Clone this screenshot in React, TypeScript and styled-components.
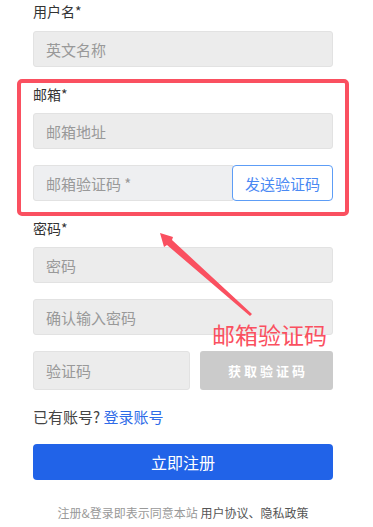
import React from "react";
import styled, { createGlobalStyle } from "styled-components";

const GlobalStyle = createGlobalStyle`
  html, body { margin: 0; padding: 0; background: #fff; }
  body { font-family: "Noto Sans CJK SC", "Noto Sans", sans-serif; }
  * { box-sizing: border-box; }
`;

const Page = styled.div`
  position: relative;
  width: 373px;
  height: 527px;
  overflow: hidden;
  padding: 1px 40px 0 33px;
`;

const Label = styled.div<{ $mt?: number }>`
  margin-top: ${(p) => p.$mt ?? 0}px;
  font-size: 14px;
  line-height: 20px;
  color: #333;
`;

const Input = styled.input<{ $mt?: number; $bg?: string; $radius?: string }>`
  display: block;
  width: 100%;
  min-width: 0;
  height: 36px;
  margin-top: ${(p) => p.$mt ?? 0}px;
  padding: 0 12px;
  border: 1px solid #e2e2e2;
  border-radius: ${(p) => p.$radius ?? "3px"};
  background: ${(p) => p.$bg ?? "#ececec"};
  font-family: inherit;
  font-size: 15px;
  color: #333;
  outline: none;
  &::placeholder { color: #999; }
`;

const Highlight = styled.div`
  margin: 12px -16px 0;
  padding: 1px 12px 11px;
  border: 4px solid #fa5060;
  border-radius: 5px;
`;

const Row = styled.div<{ $mt: number; $h: number; $gap: number }>`
  display: flex;
  gap: ${(p) => p.$gap}px;
  height: ${(p) => p.$h}px;
  margin-top: ${(p) => p.$mt}px;
  & > input { flex: 1 1 0; width: auto; margin: 0; height: 100%; }
`;

const SendButton = styled.button`
  flex: 0 0 101px;
  height: 100%;
  margin-left: -1px;
  border: 1px solid #5d9df6;
  border-radius: 4px;
  background: #fff;
  color: #4a89f3;
  font-family: inherit;
  font-size: 15px;
  padding: 0;
`;

const GrayButton = styled.button`
  flex: 0 0 133px;
  height: 100%;
  border: none;
  border-radius: 3px;
  background: #cbcbcb;
  color: #fff;
  font-family: inherit;
  font-size: 13px;
  font-weight: 700;
  letter-spacing: 3px;
  padding: 0 0 0 3px;
`;

const LoginLine = styled.div`
  margin-top: 16px;
  font-size: 15px;
  line-height: 21px;
  color: #444;
`;

const Link = styled.a`
  color: #2f6be8;
  text-decoration: none;
`;

const PrimaryButton = styled.button`
  display: block;
  width: 100%;
  height: 36px;
  margin-top: 17px;
  border: none;
  border-radius: 4px;
  background: #2163e8;
  color: #fff;
  font-family: inherit;
  font-size: 16px;
`;

const Footer = styled.div`
  margin-top: 24px;
  font-size: 12px;
  line-height: 18px;
  color: #999;
  text-align: center;
`;

const Strong = styled.span`
  color: #555;
`;

const Annotation = styled.div`
  position: absolute;
  left: 212px;
  top: 321px;
  font-size: 23px;
  line-height: 27px;
  color: #fa5060;
  white-space: nowrap;
`;

const Overlay = styled.svg`
  position: absolute;
  left: 0;
  top: 0;
  pointer-events: none;
`;

export default function App() {
  return (
    <>
      <GlobalStyle />
      <Page>
        <Label>用户名*</Label>
        <Input $mt={10} placeholder="英文名称" />

        <Highlight>
          <Label>邮箱*</Label>
          <Input $mt={9} placeholder="邮箱地址" />
          <Row $mt={16} $h={36} $gap={0}>
            <Input $bg="#eeeff1" $radius="3px 0 0 3px" placeholder="邮箱验证码 *" />
            <SendButton>发送验证码</SendButton>
          </Row>
        </Highlight>

        <Label $mt={2}>密码*</Label>
        <Input $mt={9} type="password" placeholder="密码" />
        <Input $mt={16} type="password" placeholder="确认输入密码" />
        <Row $mt={16} $h={39} $gap={10}>
          <Input placeholder="验证码" />
          <GrayButton>获取验证码</GrayButton>
        </Row>

        <LoginLine>
          已有账号? <Link href="#">登录账号</Link>
        </LoginLine>

        <PrimaryButton>立即注册</PrimaryButton>

        <Footer>
          注册&amp;登录即表示同意本站 <Strong>用户协议、隐私政策</Strong>
        </Footer>

        <Overlay width="373" height="527" viewBox="0 0 373 527">
          <polygon
            points="160,233 173,237 172,240 252,314 250,316 167,245 164,247"
            fill="#fa5060"
          />
        </Overlay>
        <Annotation>邮箱验证码</Annotation>
      </Page>
    </>
  );
}
